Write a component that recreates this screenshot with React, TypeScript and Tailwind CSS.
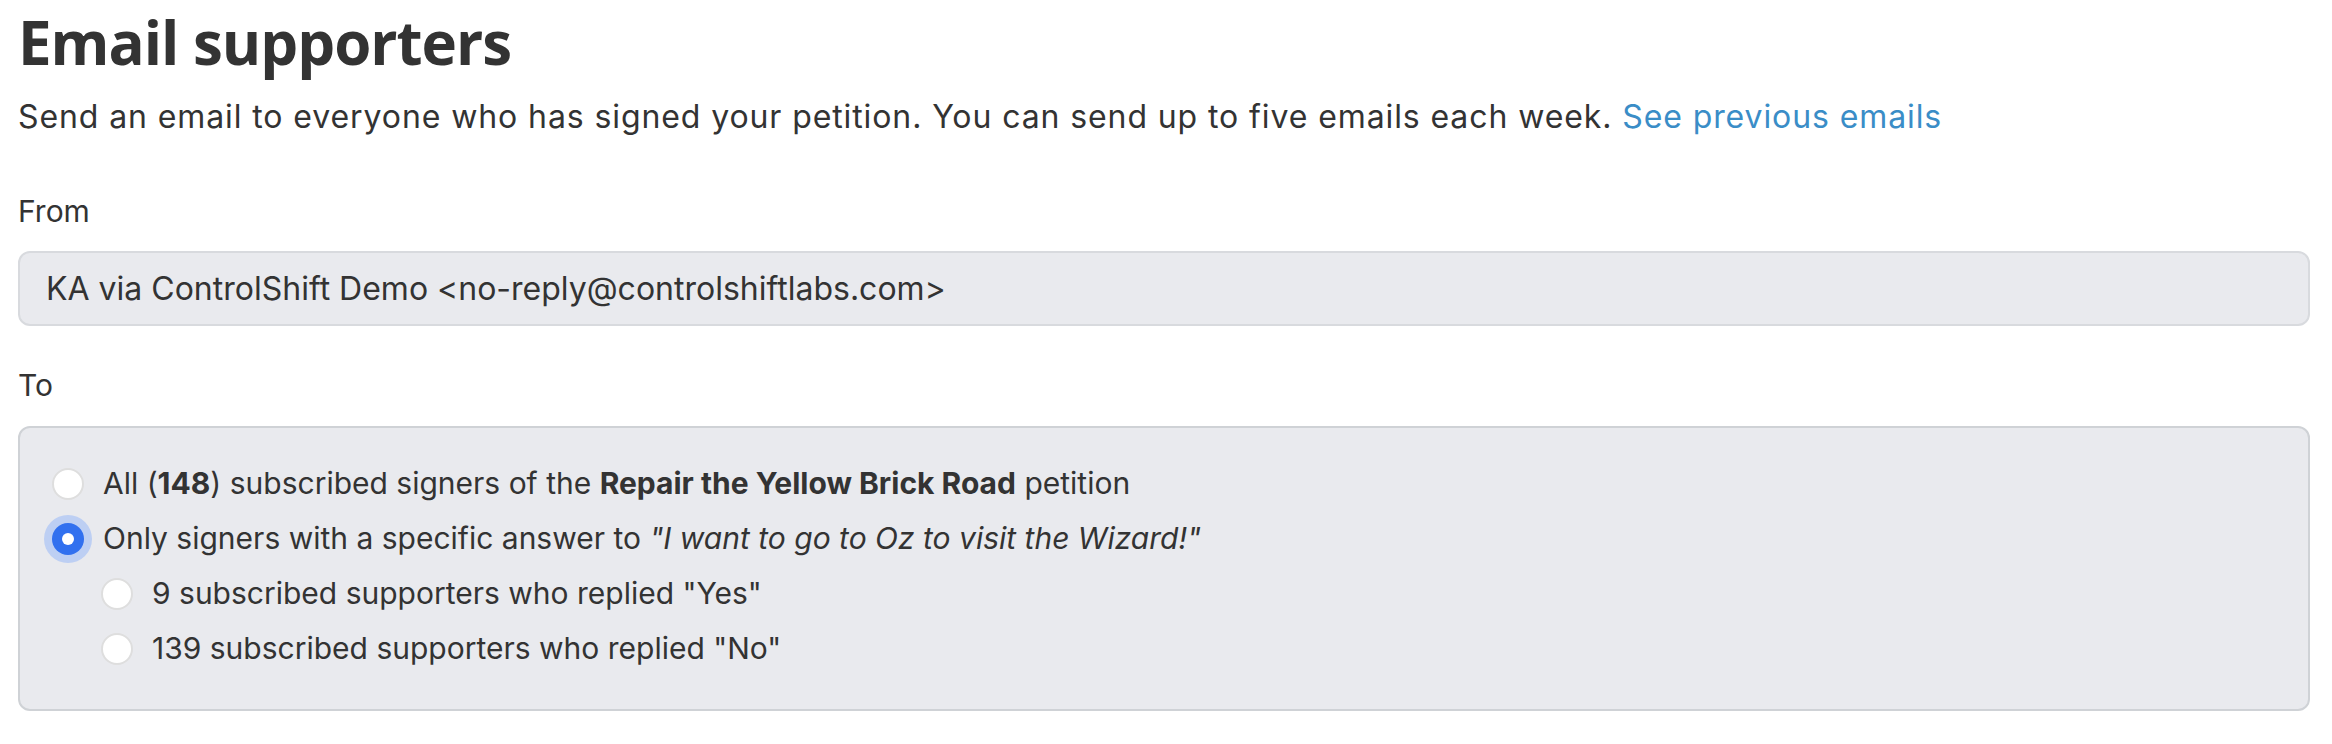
import React from 'react'

const font = { fontFamily: 'Inter, "Noto Sans", sans-serif' }

function Radio({ checked = false }: { checked?: boolean }) {
  if (checked) {
    return (
      <span className="flex h-[32px] w-[32px] shrink-0 items-center justify-center rounded-full bg-[#3170ef] shadow-[0_0_0_8px_#bdcff3]">
        <span className="h-[12px] w-[12px] rounded-full bg-white" />
      </span>
    )
  }
  return <span className="block h-[32px] w-[32px] shrink-0 rounded-full border-2 border-[#dedede] bg-white" />
}

function Option({ checked, indent, children }: { checked?: boolean; indent?: boolean; children: React.ReactNode }) {
  return (
    <label className={`flex h-[55px] items-center gap-[19px] ${indent ? 'pl-[49px]' : ''}`}>
      <Radio checked={checked} />
      <span>{children}</span>
    </label>
  )
}

export default function App() {
  return (
    <div className="min-h-screen bg-white pl-[18px] pr-[22px] text-[#333]" style={font}>
      <h1 className="pt-[6px] font-['Open_Sans'] text-[60px] font-bold leading-[72px] tracking-[-1px]">
        Email supporters
      </h1>
      <p className="mt-[19px] text-[32px] leading-[40px] tracking-[0.9px]">
        Send an email to everyone who has signed your petition. You can send up to five emails each week.{' '}
        <a className="text-[#3a8dc7]">See previous emails</a>
      </p>

      <div className="mt-[54px] text-[30px] leading-[40px]">From</div>
      <div className="mt-[20px] flex h-[75px] items-center rounded-[12px] border-2 border-[#d8dade] bg-[#e9eaee] px-[26px] text-[32px]">
        KA via ControlShift Demo &lt;no-reply@controlshiftlabs.com&gt;
      </div>

      <div className="mt-[39px] text-[30px] leading-[40px]">To</div>
      <div className="mt-[21px] rounded-[12px] border-2 border-[#cfd2d6] bg-[#e9eaee] pb-[33px] pl-[32px] pt-[28px] text-[30px]">
        <Option>
          All (<b className="font-bold">148</b>) subscribed signers of the{' '}
          <b className="font-bold">Repair the Yellow Brick Road</b> petition
        </Option>
        <Option checked>
          Only signers with a specific answer to <i>"I want to go to Oz to visit the Wizard!"</i>
        </Option>
        <Option indent>9 subscribed supporters who replied "Yes"</Option>
        <Option indent>139 subscribed supporters who replied "No"</Option>
      </div>
    </div>
  )
}
